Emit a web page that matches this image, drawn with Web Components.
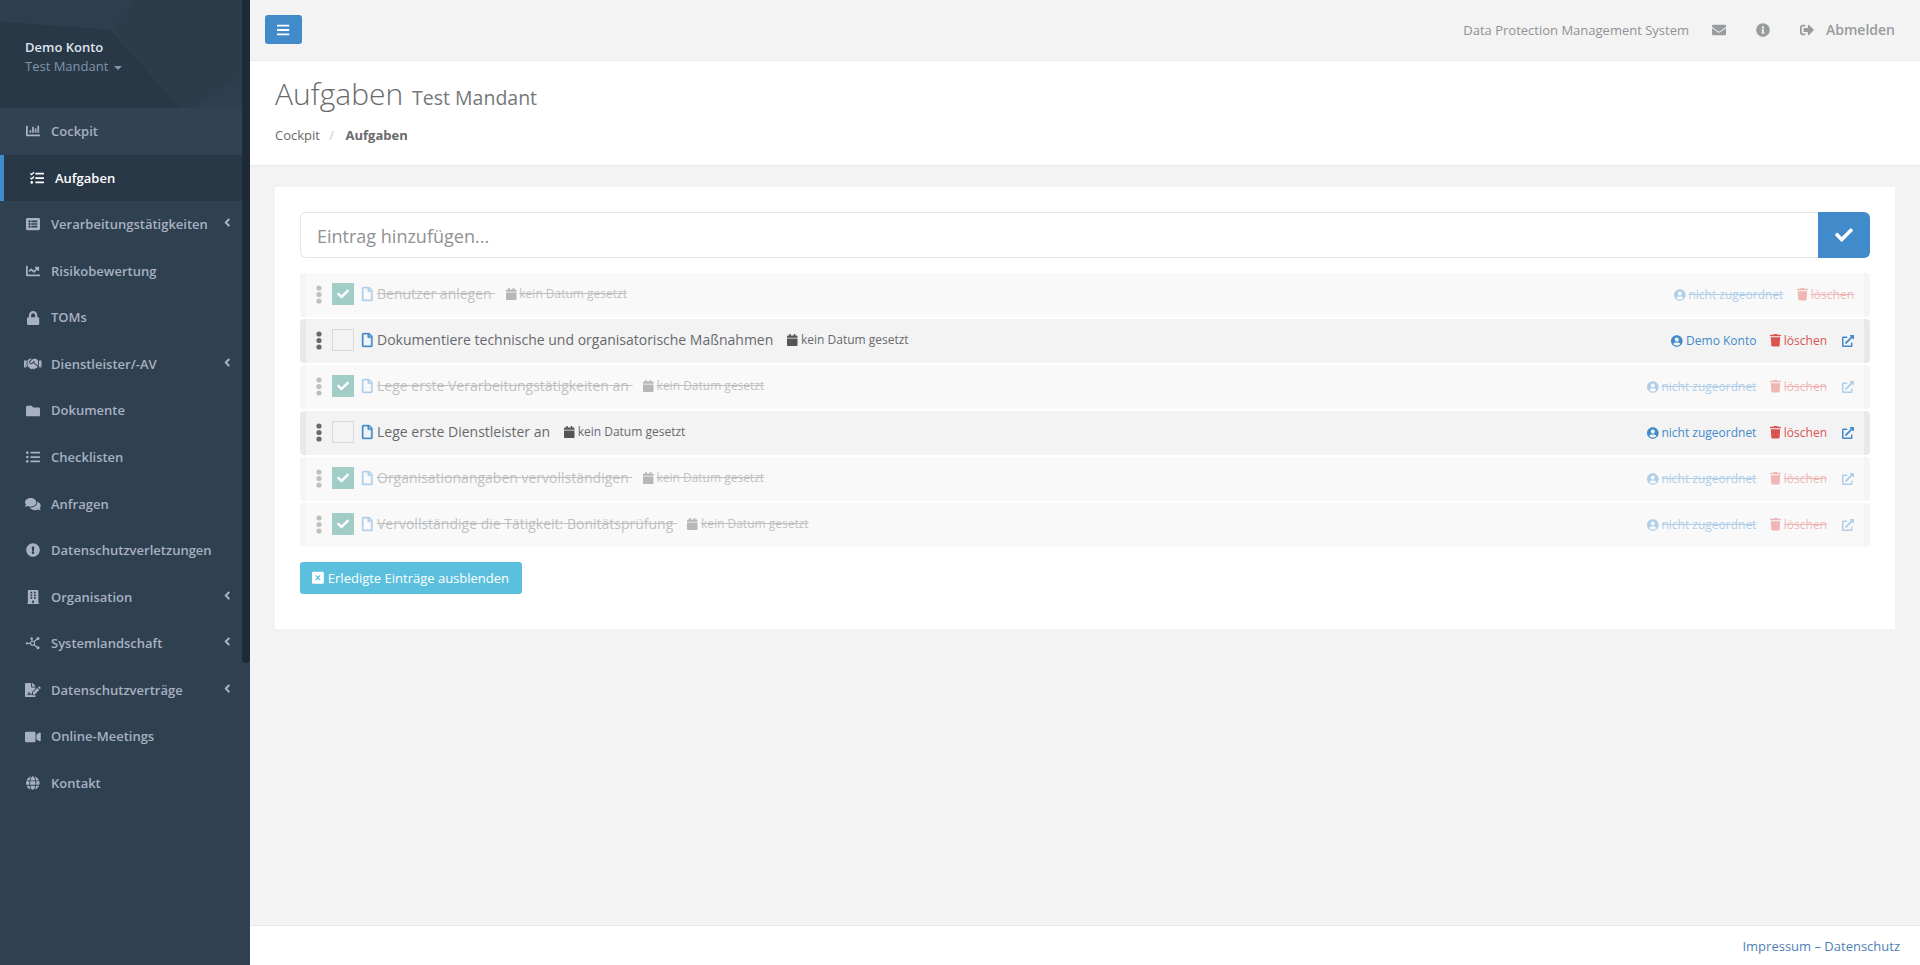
<!DOCTYPE html>
<html lang="de">
<head>
<meta charset="utf-8">
<title>Aufgaben</title>
<style>
html,body{margin:0;padding:0;height:100%;overflow:hidden;background:#f3f3f4;font-family:"Open Sans",sans-serif;color:#676a6c;font-size:13px}
</style>
</head>
<body>
<dpms-app>
  <side-nav slot="nav">
    <nav-item icon="chart-bar" class="first">Cockpit</nav-item>
    <nav-item icon="tasks" active>Aufgaben</nav-item>
    <nav-item icon="list-alt" arrow>Verarbeitungstätigkeiten</nav-item>
    <nav-item icon="chart-line">Risikobewertung</nav-item>
    <nav-item icon="lock">TOMs</nav-item>
    <nav-item icon="handshake" arrow>Dienstleister/-AV</nav-item>
    <nav-item icon="folder">Dokumente</nav-item>
    <nav-item icon="list-ul">Checklisten</nav-item>
    <nav-item icon="comments">Anfragen</nav-item>
    <nav-item icon="exclamation-circle">Datenschutzverletzungen</nav-item>
    <nav-item icon="building" arrow>Organisation</nav-item>
    <nav-item icon="network" arrow>Systemlandschaft</nav-item>
    <nav-item icon="file-signature" arrow>Datenschutzverträge</nav-item>
    <nav-item icon="video">Online-Meetings</nav-item>
    <nav-item icon="globe">Kontakt</nav-item>
  </side-nav>
  <top-bar></top-bar>
  <page-heading></page-heading>
  <todo-card>
    <todo-item done date="kein Datum gesetzt" assignee="nicht zugeordnet" noexternal>Benutzer anlegen</todo-item>
    <todo-item date="kein Datum gesetzt" assignee="Demo Konto">Dokumentiere technische und organisatorische Maßnahmen</todo-item>
    <todo-item done date="kein Datum gesetzt" assignee="nicht zugeordnet">Lege erste Verarbeitungstätigkeiten an</todo-item>
    <todo-item date="kein Datum gesetzt" assignee="nicht zugeordnet">Lege erste Dienstleister an</todo-item>
    <todo-item done date="kein Datum gesetzt" assignee="nicht zugeordnet">Organisationangaben vervollständigen</todo-item>
    <todo-item done date="kein Datum gesetzt" assignee="nicht zugeordnet">Vervollständige die Tätigkeit: Bonitätsprüfung</todo-item>
  </todo-card>
  <page-footer></page-footer>
</dpms-app>
<script>
const ICONS={
"check":[512,"M173.898 439.404l-166.4-166.4c-9.997-9.997-9.997-26.206 0-36.204l36.203-36.204c9.997-9.998 26.207-9.998 36.204 0L192 312.69 432.095 72.596c9.997-9.997 26.207-9.997 36.204 0l36.203 36.204c9.997 9.997 9.997 26.206 0 36.204l-294.4 294.401c-9.998 9.997-26.207 9.997-36.204-.001z"],
"bars":[448,"M16 132h416c8.837 0 16-7.163 16-16V76c0-8.837-7.163-16-16-16H16C7.163 60 0 67.163 0 76v40c0 8.837 7.163 16 16 16zm0 160h416c8.837 0 16-7.163 16-16v-40c0-8.837-7.163-16-16-16H16c-8.837 0-16 7.163-16 16v40c0 8.837 7.163 16 16 16zm0 160h416c8.837 0 16-7.163 16-16v-40c0-8.837-7.163-16-16-16H16c-8.837 0-16 7.163-16 16v40c0 8.837 7.163 16 16 16z"],
"envelope":[512,"M502.3 190.8c3.9-3.1 9.7-.2 9.7 4.7V400c0 26.5-21.5 48-48 48H48c-26.5 0-48-21.5-48-48V195.6c0-5 5.7-7.8 9.7-4.7 22.4 17.4 52.1 39.5 154.1 113.6 21.1 15.4 56.7 47.8 92.2 47.6 35.7.3 72-32.8 92.3-47.6 102-74.1 131.6-96.3 154-113.7zM256 320c23.2.4 56.6-29.2 73.4-41.4 132.7-96.3 142.8-104.7 173.4-128.7 5.8-4.5 9.2-11.5 9.2-18.9v-19c0-26.5-21.5-48-48-48H48C21.5 64 0 85.5 0 112v19c0 7.4 3.4 14.3 9.2 18.9 30.6 23.9 40.7 32.4 173.4 128.7 16.8 12.2 50.2 41.8 73.4 41.4z"],
"info-circle":[512,"M256 8C119.043 8 8 119.083 8 256c0 136.997 111.043 248 248 248s248-111.003 248-248C504 119.083 392.957 8 256 8zm0 110c23.196 0 42 18.804 42 42s-18.804 42-42 42-42-18.804-42-42 18.804-42 42-42zm56 254c0 6.627-5.373 12-12 12h-88c-6.627 0-12-5.373-12-12v-24c0-6.627 5.373-12 12-12h12v-64h-12c-6.627 0-12-5.373-12-12v-24c0-6.627 5.373-12 12-12h64c6.627 0 12 5.373 12 12v100h12c6.627 0 12 5.373 12 12v24z"],
"exclamation-circle":[512,"M504 256c0 136.997-111.043 248-248 248S8 392.997 8 256C8 119.083 119.043 8 256 8s248 111.083 248 248zm-248 50c-25.405 0-46 20.595-46 46s20.595 46 46 46 46-20.595 46-46-20.595-46-46-46zm-43.673-165.346l7.418 136c.347 6.364 5.609 11.346 11.982 11.346h48.546c6.373 0 11.635-4.982 11.982-11.346l7.418-136c.375-6.874-5.098-12.654-11.982-12.654h-63.383c-6.884 0-12.356 5.78-11.981 12.654z"],
"user-circle":[496,"M248 8C111 8 0 119 0 256s111 248 248 248 248-111 248-248S385 8 248 8zm0 96c48.6 0 88 39.4 88 88s-39.4 88-88 88-88-39.4-88-88 39.4-88 88-88zm0 344c-58.7 0-111.3-26.6-146.5-68.2 18.8-35.4 55.6-59.8 98.5-59.8 2.4 0 4.8.4 7.1 1.1 13 4.2 26.6 6.9 40.9 6.9 14.3 0 28-2.7 40.9-6.9 2.3-.7 4.7-1.1 7.1-1.1 42.9 0 79.7 24.4 98.5 59.8C359.3 421.4 306.7 448 248 448z"],
"trash":[448,"M432 32H312l-9.4-18.7A24 24 0 0 0 281.1 0H166.8a23.72 23.72 0 0 0-21.4 13.3L136 32H16A16 16 0 0 0 0 48v32a16 16 0 0 0 16 16h416a16 16 0 0 0 16-16V48a16 16 0 0 0-16-16zM53.2 467a48 48 0 0 0 47.9 45h245.8a48 48 0 0 0 47.9-45L416 128H32z"],
"calendar":[448,"M12 192h424c6.6 0 12 5.4 12 12v260c0 26.5-21.5 48-48 48H48c-26.5 0-48-21.5-48-48V204c0-6.6 5.4-12 12-12zm436-44v-36c0-26.5-21.5-48-48-48h-48V12c0-6.6-5.4-12-12-12h-40c-6.6 0-12 5.4-12 12v52H160V12c0-6.6-5.4-12-12-12h-40c-6.6 0-12 5.4-12 12v52H48C21.5 64 0 85.5 0 112v36c0 6.6 5.4 12 12 12h424c6.6 0 12-5.4 12-12z"],
"file":[384,"M369.9 97.9L286 14C277 5 264.8-.1 252.1-.1H48C21.5 0 0 21.5 0 48v416c0 26.5 21.5 48 48 48h288c26.5 0 48-21.5 48-48V131.9c0-12.7-5.1-25-14.1-34zM332.1 128H256V51.9l76.1 76.1zM48 464V48h160v104c0 13.3 10.7 24 24 24h104v288H48z"],
"external":[512,"M432,320H400a16,16,0,0,0-16,16V448H64V128H208a16,16,0,0,0,16-16V80a16,16,0,0,0-16-16H48A48,48,0,0,0,0,112V464a48,48,0,0,0,48,48H400a48,48,0,0,0,48-48V336A16,16,0,0,0,432,320ZM488,0h-128c-21.37,0-32.05,25.91-17,41l35.73,35.73L135,320.37a24,24,0,0,0,0,34L157.67,377a24,24,0,0,0,34,0L435.28,133.32,471,169c15,15,41,4.5,41-17V24A24,24,0,0,0,488,0Z"],
"sign-out":[512,"M497 273L329 441c-15 15-41 4.5-41-17v-96H152c-13.3 0-24-10.7-24-24v-96c0-13.3 10.7-24 24-24h136V88c0-21.4 25.9-32 41-17l168 168c9.3 9.4 9.3 24.6 0 34zM192 436v-40c0-6.6-5.4-12-12-12H96c-17.7 0-32-14.3-32-32V160c0-17.7 14.3-32 32-32h84c6.6 0 12-5.4 12-12V76c0-6.6-5.4-12-12-12H96c-53 0-96 43-96 96v192c0 53 43 96 96 96h84c6.6 0 12-5.4 12-12z"],
"lock":[448,"M400 224h-24v-72C376 68.2 307.8 0 224 0S72 68.2 72 152v72H48c-26.5 0-48 21.5-48 48v192c0 26.5 21.5 48 48 48h352c26.5 0 48-21.5 48-48V272c0-26.5-21.5-48-48-48zm-104 0H152v-72c0-39.7 32.3-72 72-72s72 32.3 72 72v72z"],
"folder":[512,"M464 128H272l-64-64H48C21.49 64 0 85.49 0 112v288c0 26.51 21.49 48 48 48h416c26.51 0 48-21.49 48-48V176c0-26.51-21.49-48-48-48z"],
"list-ul":[512,"M48 48a48 48 0 1 0 48 48 48 48 0 0 0-48-48zm0 160a48 48 0 1 0 48 48 48 48 0 0 0-48-48zm0 160a48 48 0 1 0 48 48 48 48 0 0 0-48-48zm448 16H176a16 16 0 0 0-16 16v32a16 16 0 0 0 16 16h320a16 16 0 0 0 16-16v-32a16 16 0 0 0-16-16zm0-320H176a16 16 0 0 0-16 16v32a16 16 0 0 0 16 16h320a16 16 0 0 0 16-16V80a16 16 0 0 0-16-16zm0 160H176a16 16 0 0 0-16 16v32a16 16 0 0 0 16 16h320a16 16 0 0 0 16-16v-32a16 16 0 0 0-16-16z"],
"comments":[576,"M416 192c0-88.4-93.1-160-208-160S0 103.6 0 192c0 34.3 14.1 65.9 38 92-13.4 30.2-35.5 54.2-35.8 54.5-2.2 2.3-2.8 5.7-1.5 8.7S4.8 352 8 352c36.6 0 66.9-12.3 88.7-25 32.2 15.7 70.3 25 111.3 25 114.9 0 208-71.6 208-160zm122 220c23.9-26 38-57.7 38-92 0-66.9-53.5-124.2-129.3-148.1.9 6.6 1.3 13.3 1.3 20.1 0 105.9-107.7 192-240 192-10.8 0-21.3-.8-31.7-1.9C207.8 439.6 281.8 480 368 480c41 0 79.1-9.2 111.3-25 21.8 12.7 52.1 25 88.7 25 3.2 0 6.1-1.9 7.3-4.8 1.3-2.9.7-6.3-1.5-8.7-.3-.3-22.4-24.2-35.8-54.5z"],
"angle-left":[256,"M31.7 239l136-136c9.4-9.4 24.6-9.4 33.9 0l22.6 22.6c9.4 9.4 9.4 24.6 0 33.9L127.9 256l96.4 96.4c9.4 9.4 9.4 24.6 0 33.9L201.7 413c-9.4 9.4-24.6 9.4-33.9 0l-136-136c-9.5-9.4-9.5-24.6-.1-34z"],
"chart-line":[512,"M496 384H64V80c0-8.84-7.16-16-16-16H16C7.16 64 0 71.16 0 80v336c0 17.67 14.33 32 32 32h464c8.84 0 16-7.16 16-16v-32c0-8.84-7.16-16-16-16zM464 96H345.94c-21.38 0-32.09 25.85-16.97 40.97l32.4 32.4L288 242.75l-73.37-73.37c-12.5-12.5-32.76-12.5-45.25 0l-68.69 68.69c-6.25 6.25-6.25 16.38 0 22.63l22.62 22.62c6.25 6.25 16.38 6.25 22.63 0L192 237.25l73.37 73.37c12.5 12.5 32.76 12.5 45.25 0l96-96 32.4 32.4c15.12 15.12 40.97 4.41 40.97-16.97V112c0-8.84-7.16-16-16-16z"],
"chart-bar":[512,"M332.8 320h38.4c6.4 0 12.8-6.4 12.8-12.8V172.8c0-6.4-6.4-12.8-12.8-12.8h-38.4c-6.4 0-12.8 6.4-12.8 12.8v134.4c0 6.4 6.4 12.8 12.8 12.8zm96 0h38.4c6.4 0 12.8-6.4 12.8-12.8V76.8c0-6.4-6.4-12.8-12.8-12.8h-38.4c-6.4 0-12.8 6.4-12.8 12.8v230.4c0 6.4 6.4 12.8 12.8 12.8zm-288 0h38.4c6.4 0 12.8-6.4 12.8-12.8v-70.4c0-6.4-6.4-12.8-12.8-12.8h-38.4c-6.4 0-12.8 6.4-12.8 12.8v70.4c0 6.4 6.4 12.8 12.8 12.8zm96 0h38.4c6.4 0 12.8-6.4 12.8-12.8V108.8c0-6.4-6.4-12.8-12.8-12.8h-38.4c-6.4 0-12.8 6.4-12.8 12.8v198.4c0 6.4 6.4 12.8 12.8 12.8zM496 384H64V80c0-8.84-7.16-16-16-16H16C7.16 64 0 71.16 0 80v336c0 17.67 14.33 32 32 32h464c8.84 0 16-7.16 16-16v-32c0-8.84-7.16-16-16-16z"],
"tasks":[512,"M139.61 35.5a12 12 0 0 0-17 0L58.93 98.81l-22.7-22.12a12 12 0 0 0-17 0L3.53 92.41a12 12 0 0 0 0 17l47.59 47.4a12.78 12.78 0 0 0 17.61 0l15.59-15.62L156.52 69a12.09 12.09 0 0 0 .09-17zm0 159.19a12 12 0 0 0-17 0l-63.68 63.72-22.7-22.1a12 12 0 0 0-17 0L3.53 252a12 12 0 0 0 0 17L51 316.5a12.77 12.77 0 0 0 17.6 0l15.7-15.69 72.2-72.22a12 12 0 0 0 .09-16.9zM64 368c-26.49 0-48.59 21.5-48.59 48S37.53 464 64 464a48 48 0 0 0 0-96zm432 16H208a16 16 0 0 0-16 16v32a16 16 0 0 0 16 16h288a16 16 0 0 0 16-16v-32a16 16 0 0 0-16-16zm0-320H208a16 16 0 0 0-16 16v32a16 16 0 0 0 16 16h288a16 16 0 0 0 16-16V80a16 16 0 0 0-16-16zm0 160H208a16 16 0 0 0-16 16v32a16 16 0 0 0 16 16h288a16 16 0 0 0 16-16v-32a16 16 0 0 0-16-16z"],
"list-alt":[512,"M464 480H48c-26.51 0-48-21.49-48-48V80c0-26.51 21.49-48 48-48h416c26.51 0 48 21.49 48 48v352c0 26.51-21.49 48-48 48zM128 120c-22.091 0-40 17.909-40 40s17.909 40 40 40 40-17.909 40-40-17.909-40-40-40zm0 96c-22.091 0-40 17.909-40 40s17.909 40 40 40 40-17.909 40-40-17.909-40-40-40zm0 96c-22.091 0-40 17.909-40 40s17.909 40 40 40 40-17.909 40-40-17.909-40-40-40zm288-136v-32c0-6.627-5.373-12-12-12H204c-6.627 0-12 5.373-12 12v32c0 6.627 5.373 12 12 12h200c6.627 0 12-5.373 12-12zm0 96v-32c0-6.627-5.373-12-12-12H204c-6.627 0-12 5.373-12 12v32c0 6.627 5.373 12 12 12h200c6.627 0 12-5.373 12-12zm0 96v-32c0-6.627-5.373-12-12-12H204c-6.627 0-12 5.373-12 12v32c0 6.627 5.373 12 12 12h200c6.627 0 12-5.373 12-12z"],
"building":[448,"M436 480h-20V24c0-13.255-10.745-24-24-24H56C42.745 0 32 10.745 32 24v456H12c-6.627 0-12 5.373-12 12v20h448v-20c0-6.627-5.373-12-12-12zM128 76c0-6.627 5.373-12 12-12h40c6.627 0 12 5.373 12 12v40c0 6.627-5.373 12-12 12h-40c-6.627 0-12-5.373-12-12V76zm0 96c0-6.627 5.373-12 12-12h40c6.627 0 12 5.373 12 12v40c0 6.627-5.373 12-12 12h-40c-6.627 0-12-5.373-12-12v-40zm52 148h-40c-6.627 0-12-5.373-12-12v-40c0-6.627 5.373-12 12-12h40c6.627 0 12 5.373 12 12v40c0 6.627-5.373 12-12 12zm76 160h-64v-84c0-6.627 5.373-12 12-12h40c6.627 0 12 5.373 12 12v84zm64-172c0 6.627-5.373 12-12 12h-40c-6.627 0-12-5.373-12-12v-40c0-6.627 5.373-12 12-12h40c6.627 0 12 5.373 12 12v40zm0-96c0 6.627-5.373 12-12 12h-40c-6.627 0-12-5.373-12-12v-40c0-6.627 5.373-12 12-12h40c6.627 0 12 5.373 12 12v40zm0-96c0 6.627-5.373 12-12 12h-40c-6.627 0-12-5.373-12-12V76c0-6.627 5.373-12 12-12h40c6.627 0 12 5.373 12 12v40z"],
"video":[576,"M336.2 64H47.8C21.4 64 0 85.4 0 111.8v288.4C0 426.6 21.4 448 47.8 448h288.4c26.4 0 47.8-21.4 47.8-47.8V111.8c0-26.4-21.4-47.8-47.8-47.8zm189.4 37.7L416 177.3v157.4l109.6 75.5c21.2 14.6 50.4-.3 50.4-25.8V127.5c0-25.4-29.1-40.4-50.4-25.8z"],
"globe":[496,"M336.5 160C322 70.7 287.8 8 248 8s-74 62.7-88.5 152h177zM152 256c0 22.2 1.2 43.5 3.3 64h185.3c2.1-20.5 3.3-41.8 3.3-64s-1.2-43.5-3.3-64H155.3c-2.1 20.5-3.3 41.8-3.3 64zm324.7-96c-28.6-67.9-86.5-120.4-158-141.6 24.4 33.8 41.2 84.7 50 141.6h108zM177.2 18.4C105.8 39.6 47.8 92.1 19.3 160h108c8.7-56.9 25.5-107.8 49.9-141.6zM487.4 192H372.7c2.1 21 3.3 42.5 3.3 64s-1.2 43-3.3 64h114.6c5.5-20.5 8.6-41.8 8.6-64s-3.1-43.5-8.5-64zM120 256c0-21.5 1.2-43 3.3-64H8.6C3.2 212.5 0 233.8 0 256s3.2 43.5 8.6 64h114.6c-2-21-3.2-42.5-3.2-64zm39.5 96c14.5 89.3 48.7 152 88.5 152s74-62.7 88.5-152h-177zm159.3 141.6c71.4-21.2 129.4-73.7 158-141.6h-108c-8.8 56.9-25.6 107.8-50 141.6zM19.3 352c28.6 67.9 86.5 120.4 158 141.6-24.4-33.8-41.2-84.7-50-141.6h-108z"],
"handshake":[640,"M434.7 64h-85.9c-8 0-15.7 3-21.6 8.4l-98.3 90c-.1.1-.2.3-.3.4-16.6 15.6-16.3 40.5-2.1 56 12.7 13.9 39.4 17.6 56.1 2.7.1-.1.3-.1.4-.2l79.9-73.2c6.5-5.9 16.7-5.5 22.6 1 6 6.5 5.5 16.6-1 22.6l-26.1 23.9L504 313.8c2.9 2.4 5.5 5 7.9 7.7V128l-54.6-54.6c-5.9-6-14.1-9.4-22.6-9.4zM544 128.2v223.9c0 17.7 14.3 32 32 32h64V128.2h-96zm48 223.9c-8.8 0-16-7.2-16-16s7.2-16 16-16 16 7.2 16 16-7.2 16-16 16zM0 384h64c17.7 0 32-14.3 32-32V128.2H0V384zm48-63.9c8.8 0 16 7.2 16 16s-7.2 16-16 16-16-7.2-16-16c0-8.9 7.2-16 16-16zm435.9 18.6L334.6 217.5l-30 27.5c-29.7 27.1-75.2 24.5-101.7-4.4-26.9-29.4-24.8-74.9 4.4-101.7L289.1 64h-83.8c-8.5 0-16.6 3.4-22.6 9.4L128 128v223.9h18.3l90.5 81.9c27.4 22.3 67.7 18.1 90-9.3l.2-.2 17.9 15.5c15.9 13 39.4 10.5 52.3-5.4l31.4-38.6 5.4 4.4c13.7 11.1 33.9 9.1 45-4.7l9.5-11.7c11.2-13.8 9.1-33.9-4.6-45.1z"],
"file-signature":[576,"M218.17 424.14c-2.95-5.92-8.09-6.52-10.17-6.52s-7.22.59-10.02 6.19l-7.67 15.34c-6.37 12.78-25.03 11.37-29.48-2.09L144 386.59l-10.61 31.88c-5.89 17.66-22.38 29.53-41 29.53H80c-8.84 0-16-7.16-16-16s7.16-16 16-16h12.39c4.83 0 9.11-3.08 10.64-7.66l18.19-54.64c3.3-9.81 12.44-16.41 22.78-16.41s19.48 6.59 22.77 16.41l13.88 41.64c19.75-16.19 54.06-9.7 66 14.16 1.89 3.78 5.49 5.95 9.36 6.26v-82.12l128-127.09V160H248c-13.2 0-24-10.8-24-24V0H24C10.7 0 0 10.7 0 24v464c0 13.3 10.7 24 24 24h336c13.3 0 24-10.7 24-24v-40l-128-.11c-16.12-.31-30.58-9.28-37.83-23.75zM384 121.9c0-6.3-2.5-12.4-7-16.9L279.1 7c-4.5-4.5-10.6-7-17-7H256v128h128v-6.1zm-96 225.06V416h68.99l161.68-162.78-67.88-67.88L288 346.96zm280.54-179.63l-31.87-31.87c-9.94-9.94-26.07-9.94-36.01 0l-27.25 27.25-.05.05 67.88 67.88 27.3-27.3c9.94-9.94 9.94-26.07 0-36.01z"]
};
class XIcon extends HTMLElement{
  connectedCallback(){
    const n=this.getAttribute('name'),r=this.attachShadow({mode:'open'});
    let vb,body;
    if(n==='network'){
      vb='0 0 512 512';
      body='<g fill="none" stroke="currentColor" stroke-width="42"><path d="M170 270H40M290 210l130-110M290 320l130 100M225 190l-15-80"/><circle cx="240" cy="265" r="72"/></g><circle cx="30" cy="270" r="40" fill="currentColor"/><circle cx="440" cy="90" r="55" fill="currentColor"/><circle cx="440" cy="430" r="55" fill="currentColor"/><circle cx="205" cy="90" r="48" fill="currentColor"/>';
    }else if(n==='ellipsis'){
      vb='0 0 6 19';
      body='<circle cx="3" cy="3" r="2.6" fill="currentColor"/><circle cx="3" cy="9.5" r="2.6" fill="currentColor"/><circle cx="3" cy="16" r="2.6" fill="currentColor"/>';
    }else if(n==='times-square'){
      vb='0 0 448 512';
      body='<path fill="currentColor" fill-rule="evenodd" d="M48 32h352c26.5 0 48 21.5 48 48v352c0 26.5-21.500 48-48 48H48c-26.5 0-48-21.500-48-48V80c0-26.5 21.500-48 48-48zM160 150l-34 34 64 72-64 72 34 34 64-66 64 66 34-34-64-72 64-72-34-34-64 66z"/>';
    }else{
      const i=ICONS[n];
      vb='0 0 '+i[0]+' 512';
      const extra=n==='file'?' stroke="currentColor" stroke-width="14"':'';
      body='<path fill="currentColor"'+extra+' d="'+i[1]+'"/>';
    }
    r.innerHTML='<style>:host{display:inline-flex;align-items:center;justify-content:center;vertical-align:middle;line-height:0}svg{display:block;height:var(--h,1em);width:auto;overflow:visible}</style><svg xmlns="http://www.w3.org/2000/svg" viewBox="'+vb+'" aria-hidden="true">'+body+'</svg>';
  }
}
customElements.define('x-icon',XIcon);

class DpmsApp extends HTMLElement{
  constructor(){super();this.attachShadow({mode:'open'}).innerHTML=`<style>
    :host{display:grid;grid-template-columns:250px 1fr;height:965px;width:1920px;background:#f3f3f4}
    aside{min-height:0}
    main{display:flex;flex-direction:column;min-width:0;height:965px}
  </style><aside><slot name="nav"></slot></aside><main><slot></slot></main>`;}
}
customElements.define('dpms-app',DpmsApp);

class SideNav extends HTMLElement{
  constructor(){super();this.attachShadow({mode:'open'}).innerHTML=`<style>
    :host{display:block;position:relative;height:965px;background:#2f4050;overflow:hidden}
    header{position:relative;box-sizing:border-box;height:108px;padding:38px 0 0 25px;background:#2a3a49;overflow:hidden}
    header svg{position:absolute;inset:0;width:100%;height:100%}
    .name,.sub{position:relative;display:block}
    .name{color:#dfe4ed;font-weight:600;font-size:13px;line-height:19px}
    .sub{color:#8095a8;font-size:13px;line-height:19px}
    .caret{display:inline-block;width:0;height:0;border:4px solid transparent;border-top-color:#8095a8;border-bottom:0;margin-left:2px;vertical-align:middle}
    .thumb{position:absolute;right:0;top:0;width:8px;height:663px;background:#1e2b37;border-radius:0 0 4px 4px}
  </style>
  <header>
    <svg viewBox="0 0 250 108" preserveAspectRatio="none" aria-hidden="true">
      <polygon points="0,0 250,0 250,108 180,108 110,30 0,22" fill="#2d3e4e"/>
      <polygon points="135,0 250,0 250,70 190,108 175,108 115,30" fill="#2b3c4b"/>
      <polygon points="0,22 110,30 180,108 0,108" fill="#283847"/>
    </svg>
    <span class="name">Demo Konto</span>
    <span class="sub">Test Mandant <i class="caret"></i></span>
  </header>
  <slot></slot>
  <div class="thumb"></div>`;}
}
customElements.define('side-nav',SideNav);

class NavItem extends HTMLElement{
  connectedCallback(){
    const ic=this.getAttribute('icon'),arrow=this.hasAttribute('arrow');
    this.attachShadow({mode:'open'}).innerHTML=`<style>
      :host{display:flex;align-items:center;box-sizing:border-box;height:46.57px;padding:0 0 0 26px;color:#a7b1c2;font-size:13px;font-weight:600;line-height:18.57px;position:relative}
      :host(.first){background:#314254}
      :host([active]){background:#293846;color:#fff;border-left:4px solid #428bca}
      .i{width:14px;display:inline-flex;justify-content:center;flex:none;margin-right:11px}
      x-icon{--h:14px}
      .t{flex:1;white-space:nowrap}
      .a{position:absolute;left:224px;top:15px;--h:13px}
    </style><span class="i"><x-icon name="${ic}"></x-icon></span><span class="t"><slot></slot></span>${arrow?'<x-icon class="a" name="angle-left"></x-icon>':''}`;
  }
}
customElements.define('nav-item',NavItem);

class TopBar extends HTMLElement{
  constructor(){super();this.attachShadow({mode:'open'}).innerHTML=`<style>
    :host{display:flex;align-items:center;box-sizing:border-box;height:61px;flex:none;border-bottom:1px solid #e7eaec;padding:0 25px 1px 15px;color:#8f9294;font-size:13px}
    button{width:37px;height:29px;border:0;border-radius:3px;background:#428bca;color:#fff;display:flex;align-items:center;justify-content:center;padding:0;margin:0}
    button x-icon{--h:14px}
    .sp{flex:1}
    .t{margin-right:23px}
    .ic{--h:14px;margin-right:30px}
    .out{--h:14px;margin-right:12px}
    .abm{font-size:14px;font-weight:600;color:#999c9e}
    x-icon{color:#999c9e}
    button x-icon{color:#fff}
  </style>
  <button aria-label="Menü"><x-icon name="bars"></x-icon></button>
  <span class="sp"></span>
  <span class="t">Data Protection Management System</span>
  <x-icon class="ic" name="envelope"></x-icon>
  <x-icon class="ic" name="info-circle"></x-icon>
  <x-icon class="out" name="sign-out"></x-icon>
  <span class="abm">Abmelden</span>`;}
}
customElements.define('top-bar',TopBar);

class PageHeading extends HTMLElement{
  constructor(){super();this.attachShadow({mode:'open'}).innerHTML=`<style>
    :host{display:block;box-sizing:border-box;height:105px;flex:none;background:#fff;border-bottom:1px solid #e7eaec;padding:12px 25px 0}
    h2{margin:0;font-size:30px;font-weight:300;line-height:42px;color:#676a6c}
    small{font-size:19.5px;font-weight:400;color:#75787a;margin-left:1px}
    nav{margin-top:7px;font-size:13px;line-height:19px;color:#676a6c}
    .s{color:#ccc;padding:0 8px 0 6px}
    b{font-weight:700}
  </style>
  <h2>Aufgaben <small>Test Mandant</small></h2>
  <nav>Cockpit <span class="s">/</span> <b>Aufgaben</b></nav>`;}
}
customElements.define('page-heading',PageHeading);

class TodoCard extends HTMLElement{
  constructor(){super();this.attachShadow({mode:'open'}).innerHTML=`<style>
    :host{display:block;box-sizing:border-box;flex:none;background:#fff;margin:21px 25px 0;padding:25px 25px 35px}
    form{display:flex;height:46px;margin:0 0 15px}
    .in{flex:1;box-sizing:border-box;height:46px;border:1px solid #e5e6e7;border-right:0;border-radius:6px 0 0 6px;padding:0 16px;font-size:18px;line-height:46px;color:#8f9193}
    .go{width:52px;height:46px;background:#428bca;color:#fff;border-radius:0 6px 6px 0;display:flex;align-items:center;justify-content:center}
    .go x-icon{--h:18px}
    .list{display:flex;flex-direction:column;gap:2px}
    .hide{display:inline-flex;align-items:center;gap:4px;box-sizing:border-box;height:32px;margin-top:15px;padding:0 13px 0 12px;background:#5bc0de;color:#fff;border-radius:3px;font-size:13px;font-weight:400;white-space:nowrap}
    .hide x-icon{--h:13.5px}
  </style>
  <form onsubmit="return false"><div class="in">Eintrag hinzufügen...</div><div class="go"><x-icon name="check"></x-icon></div></form>
  <div class="list"><slot></slot></div>
  <div class="hide"><x-icon name="times-square"></x-icon> Erledigte Einträge ausblenden</div>`;}
}
customElements.define('todo-card',TodoCard);

class TodoItem extends HTMLElement{
  connectedCallback(){
    const d=this.getAttribute('date'),a=this.getAttribute('assignee'),ne=this.hasAttribute('noexternal');
    this.attachShadow({mode:'open'}).innerHTML=`<style>
      :host{display:flex;align-items:center;box-sizing:border-box;height:44px;background:#f3f3f4;border-left:6px solid #e7eaec;border-right:6px solid #e7eaec;border-radius:4px;padding:0 10px;color:#676a6c;font-size:14px}
      :host([done]){opacity:.42}
      :host([done]) .strike{text-decoration:line-through}
      .drag{--h:19px;color:#676a6c;width:6px;margin-right:10px;margin-bottom:2px;flex:none}
      .cb{box-sizing:border-box;width:22px;height:22px;border:1px solid #d9d9d9;background:#f3f3f4;margin-right:8px;margin-bottom:2px;flex:none;display:flex;align-items:center;justify-content:center;color:#fff}
      :host([done]) .cb{background:#24887a;border-color:#24887a}
      .cb x-icon{--h:12px}
      .strike{white-space:pre;display:inline-flex;align-items:center}
      .title{margin-bottom:4px}
      .file{--h:14px;color:#428bca;margin-right:4.5px;margin-top:1px}
      .date{font-size:12px;margin-left:10.5px;display:inline-flex;align-items:center;margin-bottom:4px}
      .date x-icon{--h:12px;margin-right:3px;color:#555;margin-top:1px}
      .date span{white-space:pre}
      .sp{flex:1}
      .r{font-size:12px;display:inline-flex;align-items:center;white-space:pre;margin-bottom:2px}
      .r x-icon{--h:12px;margin-right:3px;margin-top:1px}
      .who{color:#428bca;margin-right:14px}
      .del{color:#d9534f}
      .del x-icon{--h:12.5px;margin-right:2.5px}
      .ext{color:#428bca;margin-left:15px;--h:12px;margin-bottom:1px}
    </style>
    <x-icon class="drag" name="ellipsis"></x-icon>
    <span class="cb">${this.hasAttribute('done')?'<x-icon name="check"></x-icon>':''}</span>
    <span class="strike title"><x-icon class="file" name="file"></x-icon><span><slot></slot> </span></span>
    <span class="date strike"><x-icon name="calendar"></x-icon><span>${d}</span></span>
    <span class="sp"></span>
    <span class="r who strike"><x-icon name="user-circle"></x-icon><span>${a}</span></span>
    <span class="r del strike"><x-icon name="trash"></x-icon><span>löschen</span></span>
    ${ne?'':'<x-icon class="ext" name="external"></x-icon>'}`;
  }
}
customElements.define('todo-item',TodoItem);

class PageFooter extends HTMLElement{
  constructor(){super();this.attachShadow({mode:'open'}).innerHTML=`<style>
    :host{display:flex;align-items:center;justify-content:flex-end;box-sizing:border-box;height:40px;margin-top:auto;flex:none;background:#fff;border-top:1px solid #e7eaec;padding:0 20px 0 0;font-size:13px;color:#4f80b5}
  </style><span>Impressum – Datenschutz</span>`;}
}
customElements.define('page-footer',PageFooter);
</script>
</body>
</html>
